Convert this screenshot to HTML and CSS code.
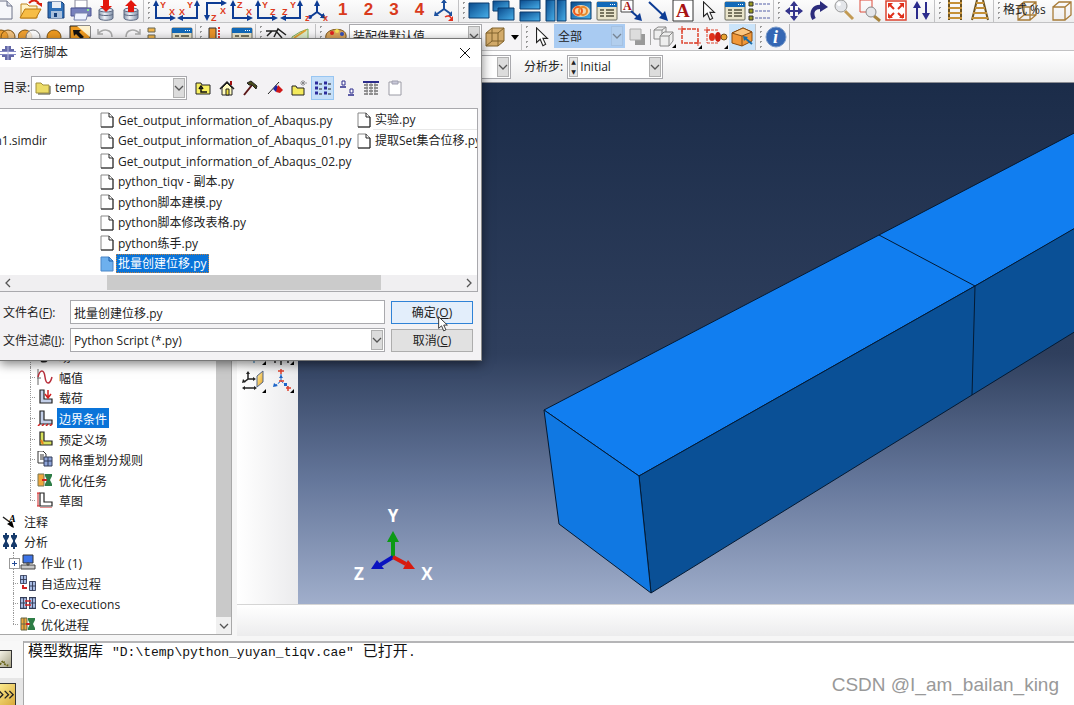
FILE: index.html
```
<!DOCTYPE html>
<html lang="zh-CN">
<head>
    <meta charset="UTF-8">
    <meta name="viewport" content="width=device-width, initial-scale=1.0">
    <title>Abaqus/CAE</title>
    <link rel="stylesheet" href="styles.css">
</head>
<body>
    <!-- Shared icons -->
    <svg class="defs" width="0" height="0" aria-hidden="true">
        <defs>
            <linearGradient id="win" x1="0" y1="0" x2="1" y2="1">
                <stop offset="0" stop-color="#0a4a8c"/><stop offset="1" stop-color="#48b0ea"/>
            </linearGradient>
            <linearGradient id="metal" x1="0" y1="0" x2="1" y2="0">
                <stop offset="0" stop-color="#8d9bb0"/><stop offset=".4" stop-color="#eef2f8"/><stop offset="1" stop-color="#8090a8"/>
            </linearGradient>
            <linearGradient id="gold" x1="0" y1="0" x2="1" y2="1">
                <stop offset="0" stop-color="#fff0b0"/><stop offset="1" stop-color="#e8a21c"/>
            </linearGradient>
            <marker id="tip" viewBox="0 0 6 6" refX="3" refY="3" markerWidth="3" markerHeight="3" orient="auto-start-reverse">
                <path d="M0 0L6 3L0 6Z" fill="#0d3c94"/>
            </marker>
        </defs>
        <symbol id="table" viewBox="0 0 24 24">
            <rect x="2" y="3" width="20" height="18" rx="1" fill="#e9e4cb" stroke="#6b6a5c"/>
            <rect x="2" y="3" width="20" height="5" fill="#1269b8"/><path d="M15 5.500H21" stroke="#fff" stroke-dasharray="1 1"/>
            <path d="M5 11H9M11 11H19M5 14H9M11 14H19M5 17H9M11 17H19" stroke="#77745f" stroke-width="2"/>
        </symbol>
        <symbol id="file" viewBox="0 0 14 16">
            <path d="M1 1H9L13 5V15H1Z" fill="#fff" stroke="#888"/><path d="M9 1V5H13V15H1" fill="none" stroke="#222"/>
        </symbol>
        <symbol id="down" viewBox="0 0 10 6"><path d="M1 1L5 5L9 1" fill="none" stroke="#555" stroke-width="1.300"/></symbol>
        <symbol id="arrow" viewBox="0 0 16 22">
            <path d="M2 1V17L6 13.500L9 20.500L12 19L9 12.500H14Z" fill="#fff" stroke="#222" stroke-width="1.200"/>
        </symbol>
        <symbol id="axisL" viewBox="0 0 24 24">
            <path d="M4 4V19H21" fill="none" stroke="#0d3c94" stroke-width="2" marker-end="url(#tip)" marker-start="url(#tip)"/>
        </symbol>
        <symbol id="axisR" viewBox="0 0 24 24">
            <path d="M20 4V19H3" fill="none" stroke="#0d3c94" stroke-width="2" marker-end="url(#tip)" marker-start="url(#tip)"/>
        </symbol>
        <symbol id="cube" viewBox="0 0 24 24">
            <path d="M3 8H15V21H3ZM3 8L9 3H21V16L15 21M15 8L21 3M9 3V16H21M9 16L3 21" fill="none"/>
        </symbol>
        <symbol id="bracket" viewBox="0 0 16 16">
            <path d="M3 1H7V10H15V14H3Z" stroke="#222" stroke-width="1.200"/>
        </symbol>
        <symbol id="grid" viewBox="0 0 8 10" preserveAspectRatio="none">
            <path d="M.5 .5H7.500V9.500H.5Z" fill="#a8bce4" stroke="#333c58"/><path d="M4 0V10M0 5H8" stroke="#333c58"/>
        </symbol>
    </svg>

    <div class="app">
        <!-- Main toolbar -->
        <div class="toolbar main-bar">
            <div class="group file-group">
                <button aria-label="New"><svg viewBox="0 0 24 24"><path d="M3 2H13L18 7V20H3Z" fill="#f6f7fa" stroke="#6c7388"/><path d="M13 2V7H18" fill="#d5d9e4" stroke="#6c7388"/></svg></button>
                <button aria-label="Open"><svg viewBox="0 0 24 24"><path d="M2 19V5H8L10 7H18V19Z" fill="#fff3c8" stroke="#c0851c"/><path d="M1 19L6 10H22L17 19Z" fill="#f7bd45" stroke="#b87912"/><path d="M10 4C14 0 18 1 20 5" fill="none" stroke="#d9210f" stroke-width="2"/><path d="M17 4H23V8Z" fill="#d9210f"/></svg></button>
                <button aria-label="Save"><svg viewBox="0 0 24 24"><path d="M4 3H18L20 5V19H4Z" fill="#2f6fb6" stroke="#163f79"/><path d="M8 3H17V9H8Z" fill="#e8edf4"/><path d="M7 12H18V19H7Z" fill="#a9c0dc"/><path d="M10 14H13V18H10Z" fill="#163f79"/></svg></button>
                <button aria-label="Print"><svg viewBox="0 0 24 24"><path d="M6 1H18V9H6Z" fill="#fff" stroke="#889"/><path d="M2 9H22V17H2Z" fill="#7781bd" stroke="#4a5290"/><path d="M6 14H19L17 21H5Z" fill="#eef3ff" stroke="#7780aa"/><path d="M18 11H20" stroke="#8df08d" stroke-width="2"/></svg></button>
                <button aria-label="Import"><svg viewBox="0 0 24 24"><path d="M5 11V19C5 22 19 22 19 19V11Z" fill="url(#metal)" stroke="#5c6880"/><ellipse cx="12" cy="11" rx="7" ry="2" fill="#dde5f0" stroke="#5c6880"/><path d="M5 15C5 17 19 17 19 15" fill="none" stroke="#5c6880"/><path d="M9 0H15V7H18L12 13L6 7H9Z" fill="#e3170d"/></svg></button>
                <button aria-label="Export"><svg viewBox="0 0 24 24"><path d="M5 11V19C5 22 19 22 19 19V11Z" fill="url(#metal)" stroke="#5c6880"/><ellipse cx="12" cy="11" rx="7" ry="2" fill="#dde5f0" stroke="#5c6880"/><path d="M5 15C5 17 19 17 19 15" fill="none" stroke="#5c6880"/><path d="M9 13H15V7H18L12 1L6 7H9Z" fill="#e3170d"/></svg></button>
            </div>
            <span class="grip"></span>
            <div class="group views-group">
                <button aria-label="XY"><svg viewBox="0 0 24 24"><use href="#axisL"/><text x="8" y="9">Y</text><text x="17" y="16">X</text></svg></button>
                <button aria-label="YX"><svg viewBox="0 0 24 24"><use href="#axisR"/><text x="10" y="9">Y</text><text x="2" y="16">X</text></svg></button>
                <button aria-label="XZ"><svg viewBox="0 0 24 24"><path d="M21 4H4V19" fill="none" stroke="#0d3c94" stroke-width="2" marker-end="url(#tip)" marker-start="url(#tip)"/><text x="17" y="15">X</text><text x="8" y="22">Z</text></svg></button>
                <button aria-label="ZX"><svg viewBox="0 0 24 24"><use href="#axisL"/><text x="8" y="9">Z</text><text x="17" y="16">X</text></svg></button>
                <button aria-label="YZ"><svg viewBox="0 0 24 24"><use href="#axisL"/><text x="8" y="9">Y</text><text x="16" y="16">Z</text></svg></button>
                <button aria-label="ZY"><svg viewBox="0 0 24 24"><use href="#axisR"/><text x="10" y="9">Y</text><text x="2" y="16">Z</text></svg></button>
                <button aria-label="Iso"><svg viewBox="0 0 24 24"><path d="M12 4V13L5 18M12 13L19 18" fill="none" stroke="#0d3c94" stroke-width="2" marker-start="url(#tip)" marker-end="url(#tip)"/><circle cx="5" cy="18" r="2" fill="#0d3c94"/><text x="0" y="22">z</text><text x="18" y="22">x</text></svg></button>
                <button class="num">1</button>
                <button class="num">2</button>
                <button class="num">3</button>
                <button class="num">4</button>
                <button aria-label="Rotate triad"><svg viewBox="0 0 24 24"><path d="M11 2V10L4 15M11 10L18 15" fill="none" stroke="#1a4f9e" stroke-width="2"/><path d="M8 4H14L11 0ZM2 12L6 17L1 17ZM19 12V17H15Z" fill="#1a4f9e"/><path d="M12 18C15 16 17 17 18 19" fill="none" stroke="#e0301e" stroke-width="1.500"/><path d="M20 17V22H15Z" fill="#e0301e"/></svg></button>
            </div>
            <span class="grip"></span>
            <div class="group wide-group">
                <button aria-label="Single viewport"><svg viewBox="0 0 24 24"><path d="M2 4H22V19H2Z" fill="url(#win)" stroke="#0a3a6c"/></svg></button>
                <button aria-label="Cascade"><svg viewBox="0 0 24 24"><path d="M1 2H17V12H1Z" fill="url(#win)" stroke="#0a3a6c"/><path d="M6 9H22V21H6Z" fill="url(#win)" stroke="#0a3a6c"/></svg></button>
                <button aria-label="Tile horizontally"><svg viewBox="0 0 24 24"><path d="M2 1H22V10H2Z" fill="url(#win)" stroke="#0a3a6c"/><path d="M2 13H22V22H2Z" fill="url(#win)" stroke="#0a3a6c"/></svg></button>
                <button aria-label="Tile vertically"><svg viewBox="0 0 24 24"><path d="M2 1H11V22H2Z" fill="url(#win)" stroke="#0a3a6c"/><path d="M13 1H22V22H13Z" fill="url(#win)" stroke="#0a3a6c"/></svg></button>
                <button aria-label="Link viewports"><svg viewBox="0 0 24 24"><path d="M2 3H22V20H2Z" fill="url(#win)" stroke="#0a3a6c"/><ellipse cx="12" cy="12" rx="9" ry="6" fill="#f6d9b0"/><circle cx="9" cy="12" r="4" fill="none" stroke="#ee5a1e" stroke-width="2"/><circle cx="14" cy="12" r="4" fill="none" stroke="#e88a2c" stroke-width="2"/></svg></button>
                <button aria-label="Viewport table"><svg><use href="#table"/></svg></button>
                <button aria-label="Annotation"><svg viewBox="0 0 24 24"><path d="M1 1H13V13H1Z" fill="#fff" stroke="#444"/><text x="3" y="11" class="serif-a">A</text><path d="M11 12L20 20" stroke="#0d3c94" stroke-width="2"/><path d="M22 22L14 20L20 14Z" fill="#0d3c94"/></svg></button>
                <button aria-label="Arrow"><svg viewBox="0 0 24 24"><path d="M3 3L19 18" stroke="#0d3c94" stroke-width="2"/><path d="M22 22L13 19L19 12Z" fill="#0d3c94"/></svg></button>
                <button aria-label="Text"><svg viewBox="0 0 24 24"><path d="M2 1H22V22H2Z" fill="#fff" stroke="#333"/><text x="5" y="18" class="serif-a big">A</text></svg></button>
                <button aria-label="Select"><svg viewBox="0 0 24 24"><use href="#arrow" x="4" y="2" width="16" height="20"/></svg></button>
                <button aria-label="Manager"><svg><use href="#table"/></svg></button>
                <button aria-label="Options"><svg viewBox="0 0 24 24"><path d="M1 3H5V7H1ZM1 10H5V14H1ZM1 17H5V21H1Z" fill="#9b9b20" stroke="#333"/><path d="M7 5H22M7 12H22M7 19H22" stroke="#5560a8" stroke-dasharray="3 1"/></svg></button>
            </div>
            <span class="grip"></span>
            <div class="group nav-group">
                <button aria-label="Pan"><svg viewBox="0 0 24 24"><path d="M12 4V20M4 12H20" stroke="#34348c" stroke-width="2"/><path d="M12 2L16 7H8ZM12 22L16 17H8ZM3 12L8 8V16ZM21 12L16 8V16Z" fill="#34348c"/></svg></button>
                <button aria-label="Rotate"><svg viewBox="0 0 24 24"><path d="M7 20C3 13 7 7 15 8" fill="none" stroke="#2c2c7c" stroke-width="4"/><path d="M13 2L21 8L13 13Z" fill="#2c2c7c"/></svg></button>
                <button aria-label="Magnify"><svg viewBox="0 0 24 24"><path d="M12 12L20 20" stroke="#c29a52" stroke-width="3"/><circle cx="8" cy="7" r="6" fill="#e4e6ea" stroke="#999"/><circle cx="6" cy="5" r="2" fill="#fff"/></svg></button>
                <button aria-label="Box zoom"><svg viewBox="0 0 24 24"><path d="M2 1H14V13H2Z" fill="none" stroke="#dd4b3a"/><path d="M16 17L22 22" stroke="#a8843e" stroke-width="3"/><circle cx="13" cy="13" r="5" fill="#e4e6ea" stroke="#888"/></svg></button>
                <button aria-label="Fit view"><svg viewBox="0 0 24 24"><path d="M2 2H22V21H2Z" fill="#fff" stroke="#dd4430" stroke-width="1.500"/><path d="M10 10L5 5M14 10L19 5M10 14L5 19M14 14L19 19" stroke="#e0301a" stroke-width="2"/><path d="M4 4H9L4 9ZM20 4V9L15 4ZM4 19V14L9 19ZM20 19H15L20 14Z" fill="#e0301a"/></svg></button>
                <button aria-label="Cycle views"><svg viewBox="0 0 24 24"><path d="M8 6V20M17 3V17" stroke="#2c2c8c" stroke-width="2"/><path d="M8 2L12 9H4ZM17 21L21 14H13Z" fill="#2c2c8c"/></svg></button>
            </div>
            <span class="grip"></span>
            <div class="group pair-group">
                <button aria-label="Parallel"><svg viewBox="0 0 24 24"><path d="M6 1V21M18 1V21" stroke="#6e5420" stroke-width="2"/><path d="M5 4H19M5 9H19M5 14H19M5 19H19" stroke="#c59138" stroke-width="2"/></svg></button>
                <button aria-label="Perspective"><svg viewBox="0 0 24 24"><path d="M9 1L4 21M15 1L20 21" stroke="#6e5420" stroke-width="2"/><path d="M8 4H16M7 9H17M5 14H19M4 19H20" stroke="#c59138" stroke-width="2"/></svg></button>
            </div>
            <span class="grip"></span>
            <div class="group render-group">
                <button aria-label="Wireframe"><svg class="brown" viewBox="0 0 24 24"><use href="#cube"/></svg></button>
                <button aria-label="Hidden"><svg class="brown" viewBox="0 0 24 24"><path d="M3 8H15V21H3ZM3 8L9 3H21V16L15 21M15 8L21 3" fill="none"/></svg></button>
                <span class="format-label">格式 %s</span>
            </div>
        </div>

        <!-- Second toolbar -->
        <div class="toolbar second-bar">
            <div class="group bool-group">
                <button aria-label="Replace"><svg viewBox="0 0 24 24"><circle cx="8" cy="12" r="7" fill="#f0a030" stroke="#7a5010"/><circle cx="15" cy="12" r="7" fill="#f0a030" fill-opacity=".6" stroke="#7a5010"/></svg></button>
                <button aria-label="Intersect"><svg viewBox="0 0 24 24"><circle cx="7" cy="12" r="7" fill="#f0a030" stroke="#7a5010"/><circle cx="15" cy="12" r="7" fill="#fff" fill-opacity=".8" stroke="#777"/></svg></button>
                <button aria-label="Both"><svg viewBox="0 0 24 24"><circle cx="11" cy="12" r="7" fill="#ee9a20" stroke="#7a5010"/></svg></button>
                <button aria-label="Invert"><svg viewBox="0 0 24 24"><path d="M1 1H21V22H1Z" fill="#ee9a20" stroke="#222"/><path d="M8 1H21V12Z" fill="#fff3d0"/><path d="M4 5H12L10 7L15 12L12 14L7 9L5 11Z" fill="#111"/></svg></button>
                <button aria-label="Undo"><svg viewBox="0 0 24 24"><path d="M4 4V9H9M4 9C9 3 18 4 18 12" fill="none" stroke="#aaa" stroke-width="1.500"/></svg></button>
                <button aria-label="Redo"><svg viewBox="0 0 24 24"><path d="M20 4V9H15M20 9C15 3 6 4 6 12" fill="none" stroke="#aaa" stroke-width="1.500"/></svg></button>
                <button aria-label="Display group"><svg viewBox="0 0 24 24"><path d="M3 3H10V7H3ZM3 10H10V17H3Z" fill="#f3b64c" stroke="#665"/></svg></button>
                <button aria-label="Display groups"><svg><use href="#table"/></svg></button>
            </div>
            <span class="grip"></span>
            <div class="group cut-group">
                <button aria-label="View cut"><svg viewBox="0 0 24 24"><path d="M5 3H12V20H5Z" fill="#e8932a" stroke="#333"/><path d="M15 2V22" stroke="#d33" stroke-width="2" stroke-dasharray="2 1"/></svg></button>
                <button aria-label="View cuts"><svg><use href="#table"/></svg></button>
            </div>
            <span class="grip"></span>
            <div class="group cut-group">
                <button aria-label="Partition"><svg viewBox="0 0 24 24"><path d="M2 6H12L18 13M3 11L8 6M10 12L14 4L22 10" fill="none" stroke="#222" stroke-width="1.500"/></svg></button>
                <button aria-label="Mesh"><svg viewBox="0 0 24 24"><path d="M2 12L10 7L18 4V16H2Z" fill="#dcebc8" stroke="#7fae58"/><path d="M4 13L16 5" stroke="#e0a030" stroke-width="2"/></svg></button>
            </div>
            <span class="grip"></span>
            <button aria-label="Color code"><svg viewBox="0 0 24 24"><path d="M2 10C4 3 21 2 22 10C23 15 18 18 14 15C8 20 0 17 2 10Z" fill="#d9a45a" stroke="#75501c"/><circle cx="8" cy="8" r="2" fill="#e02020"/><circle cx="13" cy="6" r="2" fill="#f4e050"/><circle cx="18" cy="9" r="2" fill="#3450b8"/></svg></button>
            <span class="combo defaults-combo">
                <select aria-label="Color mapping"><option>装配件默认值</option></select>
                <span class="drop"><svg><use href="#down"/></svg></span>
            </span>
            <button aria-label="Translucency"><svg class="translucent" viewBox="0 0 24 24"><path d="M3 8L9 3H21V16L15 21H3Z" fill="#d3ab6a" stroke="none"/><use href="#cube"/></svg></button>
            <button class="caret" aria-label="More"><svg viewBox="0 0 8 5"><path d="M0 0H8L4 5Z"/></svg></button>
            <span class="grip"></span>
            <button class="pick" aria-label="Select entities"><svg viewBox="0 0 24 24"><use href="#arrow" x="4" y="2" width="16" height="20"/></svg></button>
            <span class="combo all-combo">
                <select aria-label="Selection filter"><option>全部</option></select>
                <span class="drop"><svg><use href="#down"/></svg></span>
            </span>
            <button class="pick" aria-label="Underlying"><svg viewBox="0 0 24 24"><path d="M9 9H19V20H9Z" fill="#999"/><path d="M4 4H15V15H4Z" fill="#ddd" stroke="#aaa"/></svg></button>
            <span class="line"></span>
            <button aria-label="Inside"><svg viewBox="0 0 24 24"><g fill="#eee" stroke="#888"><path d="M2 5L6 2H14V10L10 14H2ZM2 5H10V14M10 5L14 2"/><path d="M8 11L12 7H21V16L17 21H8ZM8 11H17V21M17 11L21 7"/></g><path d="M24 19V23H20Z"/></svg></button>
            <button aria-label="Rectangle"><svg viewBox="0 0 24 24"><path d="M4 4H20V18H4Z" fill="none" stroke="#dd4430" stroke-width="1.500" stroke-dasharray="4 1"/><path d="M0 4H7M4 1V7M17 18H23M20 15V21" stroke="#dd4430"/><path d="M24 20V24H20Z"/></svg></button>
            <button aria-label="Drag shape"><svg viewBox="0 0 24 24"><path d="M3 5H15M3 18H15M3 5V18" fill="none" stroke="#dd4430" stroke-dasharray="3 1"/><path d="M0 5H6M3 2V8" stroke="#dd4430"/><ellipse cx="8" cy="12" rx="3" ry="4" fill="#e0301a"/><ellipse cx="14" cy="12" rx="3" ry="5" fill="#c91d10"/><circle cx="20" cy="12" r="3" fill="#e8a030" stroke="#75501c"/><path d="M24 20V24H20Z"/></svg></button>
            <button class="active" aria-label="Closest"><svg viewBox="0 0 24 24"><path d="M2 8L13 3L22 7V16L12 21L2 18Z" fill="#f0983a" stroke="#8a4c10"/><path d="M2 8L13 3L22 7L12 11Z" fill="#fbc57e" stroke="#8a4c10"/><path d="M12 11V21" stroke="#8a4c10"/><path d="M15 13L22 19" stroke="#176ba8" stroke-width="2"/><path d="M13 11L18 12L14 16Z" fill="#176ba8"/></svg></button>
            <span class="grip"></span>
            <button class="info" aria-label="Query"><svg viewBox="0 0 24 24"><circle cx="12" cy="12" r="10" fill="#3567b4" stroke="#7b9bc9"/><text x="9" y="18" class="info-i">i</text></svg></button>
            <span class="bar-end"></span>
        </div>

        <!-- Context bar -->
        <div class="context-bar">
            <span class="combo module-combo">
                <select aria-label="装配"><option></option></select>
                <span class="drop"><svg><use href="#down"/></svg></span>
            </span>
            <label for="step">分析步:</label>
            <span class="combo step-combo">
                <span class="spin"><i>▲</i><i>▼</i></span>
                <select id="step"><option>Initial</option></select>
                <span class="drop"><svg><use href="#down"/></svg></span>
            </span>
        </div>

        <div class="workspace">
            <!-- Model tree -->
            <div class="tree-panel">
                <ul class="tree">
                    <li class="deep"><svg class="ico" viewBox="0 0 16 16"><path d="M4 13C10 15 12 11 10 6" fill="none" stroke="#222" stroke-width="2"/></svg><span>场</span></li>
                    <li class="deep"><svg class="ico" viewBox="0 0 16 16"><path d="M1 0V16M0 9H4" stroke="#666"/><path d="M1 8C3 0 7 0 8 8S13 16 15 8" fill="none" stroke="#b8303c" stroke-width="1.500"/></svg><span>幅值</span></li>
                    <li class="deep"><svg class="ico" viewBox="0 0 16 16" fill="#c3cfe8"><use href="#bracket"/><path d="M11 1V8M8 5L11 9L14 5" fill="none" stroke="#d02020" stroke-width="1.500"/></svg><span>载荷</span></li>
                    <li class="deep"><svg class="ico" viewBox="0 0 16 16" fill="#c3cfe8"><use href="#bracket"/><path d="M1 16L3 14M5 16L7 14M9 16L11 14M13 16L15 14" stroke="#d02020" stroke-width="1.500"/></svg><span class="selected">边界条件</span></li>
                    <li class="deep"><svg class="ico" viewBox="0 0 16 16" fill="#d6e05c"><use href="#bracket"/><path d="M4 9L6 13" stroke="#f08020" stroke-width="2"/></svg><span>预定义场</span></li>
                    <li class="deep"><svg class="ico" viewBox="0 0 16 16"><path d="M1 0H6L9 3V12H1Z" fill="#fff" stroke="#333"/><path d="M3 4H7M3 6H7M3 8H7" stroke="#333"/><path d="M7 6H15V15H7Z" fill="#8ea4d8" stroke="#333c58"/><path d="M11 6V15M7 10H15" stroke="#333c58"/></svg><span>网格重划分规则</span></li>
                    <li class="deep"><svg class="ico" viewBox="0 0 16 16"><path d="M1 2H7V14H1Z" fill="#f0a83c" stroke="#775"/><path d="M5 8H11" stroke="#d02020" stroke-width="2"/><path d="M8 2H15V4L13 8L15 12V14H8V12L10 8L8 4Z" fill="#2e7d46"/></svg><span>优化任务</span></li>
                    <li class="deep last"><svg class="ico" viewBox="0 0 16 16" fill="#fff"><use href="#bracket"/><path d="M1 1V14M0 1H3M0 14H3M3 16H15" stroke="#d02020"/></svg><span>草图</span></li>
                    <li class="root"><svg class="ico" viewBox="0 0 16 16"><path d="M1 4L9 10M8 12L11 14" stroke="#222" stroke-width="1.500"/><path d="M5 11L12 15L10 8Z"/><text x="7" y="9" class="note-a">A</text></svg><span>注释</span></li>
                    <li class="root"><svg class="ico" viewBox="0 0 16 16"><path d="M4 0V16M12 0V16M1 3H7M1 13H7M9 3H15M9 13H15" stroke="#153a6b" stroke-width="2"/><path d="M4 9L1 4H7ZM4 7L7 12H1ZM12 9L9 4H15ZM12 7L15 12H9Z" fill="#153a6b"/></svg><span>分析</span></li>
                    <li class="mid plus"><svg class="ico" viewBox="0 0 16 16"><path d="M3 1H13V9H3Z" fill="#3d74e8" stroke="#333"/><path d="M7 9H9V11H7ZM1 11H15V15H1Z" fill="#c8c8c8" stroke="#444"/></svg><span>作业 (1)</span></li>
                    <li class="mid"><svg class="ico" viewBox="0 0 16 16"><use href="#grid" x="0" y="0" width="7" height="9"/><use href="#grid" x="9" y="6" width="7" height="10"/><path d="M3 10V13H7" fill="none" stroke="#d02020" stroke-width="2"/></svg><span>自适应过程</span></li>
                    <li class="mid"><svg class="ico" viewBox="0 0 16 16"><use href="#grid" x="0" y="2" width="7" height="12"/><use href="#grid" x="9" y="2" width="7" height="12"/><path d="M5 6H11M5 10H11" stroke="#d02020" stroke-width="1.500"/></svg><span>Co-executions</span></li>
                    <li class="mid last"><svg class="ico" viewBox="0 0 16 16"><path d="M1 2H7V14H1ZM4 2V14M1 8H7" fill="#f0a83c" stroke="#664"/><path d="M6 8H11" stroke="#d02020" stroke-width="2"/><path d="M8 2H15V4L13 8L15 12V14H8V12L10 8L8 4Z" fill="#2e7d46"/></svg><span>优化进程</span></li>
                </ul>
                <div class="vscroll"><span class="thumb"></span><span class="vdown"><svg><use href="#down"/></svg></span></div>
            </div>

            <div class="stage">
                <div class="stage-top">
                    <!-- Module toolbox -->
                    <div class="toolbox">
                        <button aria-label="Create field"><svg viewBox="0 0 24 24"><path d="M12 4V22" stroke="#176ba8"/><path d="M24 20V24H20Z"/></svg></button>
                        <button aria-label="Field manager"><svg viewBox="0 0 24 24"><path d="M5 22V19H18V22M11 18V24" fill="none" stroke="#222" stroke-width="1.500"/><path d="M24 20V24H20Z"/></svg></button>
                        <button aria-label="Create plane"><svg viewBox="0 0 24 24"><path d="M6 4V10L2 13M6 10H12M2 19H13" fill="none" stroke="#222" stroke-width="1.500"/><path d="M4 5L6 2L8 5ZM11 8L14 10L11 12ZM3 17L0 19L3 21ZM12 17L15 19L12 21ZM0 14L1 10L4 13Z" fill="#222"/><path d="M15 7L21 2V13L15 18Z" fill="url(#gold)" stroke="#568"/><path d="M24 20V24H20Z"/></svg></button>
                        <button aria-label="Create triad"><svg viewBox="0 0 24 24"><path d="M11 5V12L5 17M11 12L18 18" fill="none" stroke="#1b64c8" stroke-dasharray="3 1"/><path d="M8 2H14M11 0V5M9 12H14M16 19H21M18 17V22" stroke="#e0402c" stroke-width="1.500"/><path d="M9 9L11 6L13 9ZM3 18L4 14L8 17ZM14 14H17V17H14Z" fill="#1b64c8"/><path d="M24 20V24H20Z"/></svg></button>
                    </div>

                    <!-- Viewport -->
                    <div class="viewport">
                        <svg class="scene" viewBox="0 0 776 521" preserveAspectRatio="xMinYMin slice">
                            <g stroke="#041a33" stroke-width="1" stroke-linejoin="round">
                                <path d="M246 327L581 152L960 -46L1100 -40L677 203L341 393Z" fill="#117ef0"/>
                                <path d="M341 393L677 203L960 39V136L674 312L353 510Z" fill="#0a5096"/>
                                <path d="M246 327L341 393L353 510L261 441Z" fill="#1078e2"/>
                                <path d="M581 152L677 203L674 312" fill="none"/>
                            </g>
                            <path d="M95 474V455" stroke="#0b9a14" stroke-width="4"/>
                            <path d="M95 448L101 459H89Z" fill="#0b9a14"/>
                            <path d="M95 474L82 482" stroke="#0a12c0" stroke-width="4"/>
                            <path d="M73 486L79 477L86 486Z" fill="#0a12c0"/>
                            <path d="M95 474L108 481" stroke="#d81a0e" stroke-width="4"/>
                            <path d="M117 486L110 477L105 486Z" fill="#d81a0e"/>
                            <g class="triad"><text x="95" y="439">Y</text><text x="129" y="497">X</text><text x="61" y="497">Z</text></g>
                        </svg>
                    </div>
                </div>
                <div class="prompt-bar"></div>
            </div>
        </div>

        <!-- Message area -->
        <div class="console">
            <div class="console-tabs">
                <button class="msg-tab" aria-label="Messages"><svg viewBox="0 0 12 18"><path d="M0 15C3 10 5 10 4 14L9 16" fill="none" stroke="#6a661c" stroke-width="2" stroke-dasharray="2 1"/></svg></button>
                <button class="cli-tab" aria-label="Command line"><svg viewBox="0 0 16 12"><path d="M-1 2L3 6L-1 10M5 2L9 6L5 10M10 2L14 6L10 10" fill="none" stroke="#222" stroke-width="1.500"/></svg></button>
            </div>
            <div class="messages"><span class="cn">模型数据库 </span>"D:\temp\python_yuyan_tiqv.cae"<span class="cn"> 已打开</span>.</div>
        </div>
    </div>

    <!-- Run script dialog -->
    <div class="dialog" role="dialog" aria-label="运行脚本">
        <div class="dialog-title">
            <svg viewBox="0 0 16 16" width="16" height="16"><path d="M5 1H11V4H5ZM2 4H14V7H2ZM2 9H14V12H2ZM5 12H11V15H5Z" fill="#6469a8"/><path d="M0 6H16V7H0ZM0 9H16V10H0Z" fill="#8489c4"/><path d="M8 1V15" stroke="#b4b8e0"/></svg>
            <span>运行脚本</span>
            <button class="close" aria-label="Close"><svg viewBox="0 0 10 10" width="10" height="10"><path d="M0 0L10 10M10 0L0 10" stroke="#111"/></svg></button>
        </div>
        <div class="dir-row">
            <label for="dir">目录:</label>
            <span class="combo dir-combo">
                <svg class="folder" viewBox="0 0 16 14"><path d="M1 2H6L8 4H14V12H1Z" fill="#ecdc68" stroke="#a0903c"/><path d="M3 13H15V5" fill="none" stroke="#4b4a30"/></svg>
                <select id="dir"><option>temp</option></select>
                <span class="drop"><svg><use href="#down"/></svg></span>
            </span>
            <div class="dir-tools">
                <button aria-label="Up"><svg viewBox="0 0 16 16"><path d="M1 3H6L7 5H15V14H1Z" fill="#f8f060" stroke="#222"/><path d="M12 12H6V8M4 9L6 6L8 9" fill="none" stroke="#111" stroke-width="1.500"/></svg></button>
                <button aria-label="Home"><svg viewBox="0 0 16 16"><path d="M3 8V15H13V8L8 3Z" fill="#fffcc0" stroke="#222"/><path d="M1 9L8 2L15 9" fill="none" stroke="#222" stroke-width="1.500"/><path d="M12 1V5" stroke="#a01010" stroke-width="2"/><path d="M7 9H10V15H7Z" fill="#f0e040" stroke="#222"/></svg></button>
                <button aria-label="Work"><svg viewBox="0 0 16 16"><path d="M1 15L9 5" stroke="#5a1616" stroke-width="2"/><path d="M4 3L8 1L14 6L13 9L9 5L6 5Z" fill="#4a4c1c" stroke="#222"/></svg></button>
                <button aria-label="Bookmark"><svg viewBox="0 0 16 16"><path d="M1 14L12 2" stroke="#222"/><path d="M9 5L12 8L9 12L6 9Z" fill="#2226a0"/><path d="M11 5L16 10L13 13L9 12Z" fill="#d01818"/></svg></button>
                <button aria-label="New folder"><svg viewBox="0 0 16 16"><path d="M1 6H5L6 8H13V15H1Z" fill="#f4ea5c" stroke="#222"/><path d="M12 0V6M9 3H16M10 1L14 5M14 1L10 5" stroke="#777" stroke-width=".7"/></svg></button>
                <button class="active" aria-label="List"><svg viewBox="0 0 16 16"><path d="M0 3H3M9 3H12M0 8H3M9 8H12M0 13H3M9 13H12" stroke="#2c2c9c" stroke-width="3"/><path d="M4 4H7M13 4H16M4 9H7M13 9H16M4 14H7M13 14H16" stroke="#222"/></svg></button>
                <button aria-label="Icons"><svg viewBox="0 0 16 16"><path d="M3 1H6V5H3ZM11 9H14V13H11Z" fill="#fff" stroke="#2c2c8c"/><path d="M1 7H7M9 15H15" stroke="#2c2c8c" stroke-width="1.500"/></svg></button>
                <button aria-label="Details"><svg viewBox="0 0 16 16"><path d="M0 2H16" stroke="#2c2c8c" stroke-width="2"/><path d="M1 5H16M1 8H16M1 11H16M1 14H16" stroke="#333" stroke-dasharray="4 1"/><path d="M4 3V15M8 3V15M12 3V15" stroke="#888"/></svg></button>
                <button aria-label="Paste"><svg viewBox="0 0 16 16"><path d="M2 2H14V15H2Z" fill="#fff" stroke="#9a9aa4"/><path d="M5 1H11V4H5Z" fill="#c8c8d8" stroke="#a0a0b0"/></svg></button>
            </div>
        </div>
        <div class="file-box">
            <ul class="files">
                <li class="clipped">n1.simdir</li>
                <li class="second first"><svg><use href="#file"/></svg><span>Get_output_information_of_Abaqus.py</span></li>
                <li class="second"><svg><use href="#file"/></svg><span>Get_output_information_of_Abaqus_01.py</span></li>
                <li class="second"><svg><use href="#file"/></svg><span>Get_output_information_of_Abaqus_02.py</span></li>
                <li class="second"><svg><use href="#file"/></svg><span>python_tiqv - 副本.py</span></li>
                <li class="second"><svg><use href="#file"/></svg><span>python脚本建模.py</span></li>
                <li class="second"><svg><use href="#file"/></svg><span>python脚本修改表格.py</span></li>
                <li class="second"><svg><use href="#file"/></svg><span>python练手.py</span></li>
                <li class="second picked"><svg viewBox="0 0 14 16"><path d="M1 1H9L13 5V15H1Z" fill="#6db0ee" stroke="#4a86c8"/><path d="M9 1V5H13" fill="none" stroke="#1c5ca8"/></svg><span class="selected">批量创建位移.py</span></li>
                <li class="third first"><svg><use href="#file"/></svg><span>实验.py</span></li>
                <li class="third"><svg><use href="#file"/></svg><span>提取Set集合位移.py</span></li>
            </ul>
            <div class="hscroll">
                <span class="hleft"><svg><use href="#down"/></svg></span>
                <span class="hthumb"></span>
                <span class="hright"><svg><use href="#down"/></svg></span>
            </div>
        </div>
        <div class="dialog-form">
            <label for="fname">文件名(<u>F</u>):</label>
            <input id="fname" type="text" value="批量创建位移.py">
            <button class="ok"><span>确定(<u>O</u>)</span></button>
            <label for="filter">文件过滤(<u>I</u>):</label>
            <span class="combo filter-combo">
                <select id="filter"><option>Python Script (*.py)</option></select>
                <span class="drop"><svg><use href="#down"/></svg></span>
            </span>
            <button class="cancel"><span>取消(<u>C</u>)</span></button>
        </div>
        <svg class="pointer" viewBox="0 0 16 22"><use href="#arrow"/></svg>
    </div>

    <div class="watermark">CSDN @I_am_bailan_king</div>
</body>
</html>
```
FILE: styles.css
```
* {
    box-sizing: border-box;
}

body {
    margin: 0;
    font-family: "Open Sans", "Noto Sans CJK SC", sans-serif;
    font-size: 12px;
    line-height: 16px;
    color: #222;
    background-color: #fff;
    overflow: hidden;
}

button {
    display: flex;
    align-items: center;
    justify-content: center;
    padding: 0;
    border: none;
    background: none;
    font: inherit;
    color: inherit;
}

select,
input {
    font: inherit;
    color: inherit;
}

.defs {
    position: absolute;
}

.app {
    display: flex;
    flex-direction: column;
    height: 100vh;
}

/* Toolbars */
.toolbar {
    display: flex;
    flex: none;
    overflow: hidden;
    background: linear-gradient(#fcfcfc, #eeeeef);
    border-bottom: 1px solid #c2c2c4;
}

.toolbar button {
    flex: none;
    width: 26px;
    height: 26px;
}

.toolbar button svg {
    flex: none;
    width: 24px;
    height: 24px;
}

.toolbar text {
    font: bold 9px/9px "Liberation Sans", sans-serif;
    fill: #dd3a20;
}

.toolbar .serif-a {
    font: bold 12px "Liberation Serif", serif;
    fill: #a81414;
}

.toolbar .serif-a.big {
    font-size: 19px;
}

.toolbar .info-i {
    font: italic bold 18px "Liberation Serif", serif;
    fill: #fff;
}

.group {
    display: flex;
    flex: none;
}

.group button {
    flex: 1;
    width: auto;
}

.grip {
    flex: none;
    width: 8px;
    border-left: 1px solid #c2c2c4;
    background: radial-gradient(circle, #999 1px, transparent 1px) 2px 0 / 5px 5px repeat-y;
}

.main-bar {
    height: 23px;
}

.main-bar button {
    margin-top: -2px;
}

.file-group {
    width: 149px;
    margin-left: -6px;
}

.views-group {
    width: 307px;
}

.wide-group {
    width: 307px;
}

.nav-group {
    width: 153px;
}

.pair-group {
    width: 51px;
}

.render-group {
    position: relative;
    width: 78px;
    padding-left: 8px;
}

.format-label {
    position: absolute;
    left: 2px;
    top: 2px;
    white-space: nowrap;
}

.main-bar .num {
    height: 24px;
    font: bold 17px "Liberation Sans", sans-serif;
    color: #d93a1c;
}

.brown {
    stroke: #a87c38;
    stroke-width: 1.3;
}

.translucent {
    stroke: #80622c;
    stroke-width: 1;
}

.second-bar {
    height: 28px;
    background: #f5f4f6;
    padding-top: 1px;
}

.bool-group {
    width: 203px;
    margin-left: -8px;
}

.cut-group {
    width: 52px;
}

.toolbar .caret {
    width: 13px;
}

.toolbar .caret svg {
    width: 8px;
    height: 5px;
}

.toolbar .pick {
    width: 25px;
}

.line {
    align-self: center;
    width: 1px;
    height: 16px;
    background-color: #aaa;
}

.toolbar .active {
    background-color: #cbe4fa;
}

.bar-end {
    border-left: 1px solid #b5b5b8;
}

/* Drop-downs */
.combo {
    display: flex;
    align-items: center;
    flex: none;
    height: 24px;
    padding: 1px;
    background-color: #fff;
    border: 1px solid #a9a9ad;
}

.combo select {
    flex: 1;
    min-width: 0;
    height: 20px;
    padding: 1px 2px 0;
    border: none;
    background: none;
    appearance: none;
}

.drop {
    display: flex;
    align-items: center;
    justify-content: center;
    width: 12px;
    height: 20px;
    background-color: #dcdcdc;
    border: 1px solid #b0b0b0;
}

.drop svg {
    width: 10px;
    height: 6px;
}

.defaults-combo {
    width: 133px;
}

.all-combo {
    width: 71px;
    background-color: #a9cbf2;
    border-color: #a9cbf2;
}

.all-combo .drop {
    background-color: #b9d0ea;
    border-color: #a4bbd6;
    opacity: .6;
}

/* Context bar */
.context-bar {
    display: flex;
    align-items: center;
    flex: none;
    height: 32px;
    background: linear-gradient(#fff, #ececed);
    border-bottom: 1px solid #8b8d93;
}

.module-combo {
    width: 511px;
}

.context-bar label {
    padding: 0 4px 0 13px;
}

.step-combo {
    width: 96px;
}

.spin {
    display: flex;
    flex-direction: column;
    justify-content: space-between;
    width: 9px;
    height: 20px;
    background-color: #e6e6e6;
    border: 1px solid #b5b5b5;
}

.spin i {
    font: 6px/8px "DejaVu Sans", sans-serif;
    text-align: center;
}

/* Workspace */
.workspace {
    display: flex;
    flex: 1;
    min-height: 0;
    background-color: #f6f6f6;
}

.tree-panel {
    display: flex;
    align-items: flex-end;
    flex: none;
    width: 232px;
    margin-bottom: 6px;
    background-color: #fff;
    border-right: 1px solid #a8a8a8;
    border-bottom: 1px solid #a8a8a8;
}

.tree {
    display: grid;
    grid-auto-rows: 1fr;
    flex: 1;
    height: 288px;
    margin: 0;
    padding: 0;
    list-style: none;
}

.tree li {
    position: relative;
    display: flex;
    align-items: center;
    gap: 4px;
}

.tree span {
    padding: 4px 2px 0;
}

.ico {
    flex: none;
    width: 16px;
    height: 16px;
}

.note-a {
    font: italic bold 10px "Liberation Serif", serif;
}

.tree .root {
    padding-left: 2px;
}

.tree .mid {
    padding-left: 20px;
    gap: 3px;
}

.tree .deep {
    padding-left: 37px;
}

/* Dotted connectors */
.tree .deep::before,
.tree .mid::before {
    content: "";
    position: absolute;
    top: 0;
    left: 13px;
    height: 100%;
    border-left: 1px dotted #999;
}

.tree .deep::after,
.tree .mid::after {
    content: "";
    position: absolute;
    top: 50%;
    left: 13px;
    width: 5px;
    border-top: 1px dotted #999;
}

.tree .deep::before,
.tree .deep::after {
    left: 30px;
}

.tree .last::before {
    height: 50%;
}

.tree .plus::after {
    top: 6px;
    left: 9px;
    width: 9px;
    height: 9px;
    background: linear-gradient(#234a94, #234a94) center / 5px 1px no-repeat, linear-gradient(#234a94, #234a94) center / 1px 5px no-repeat, #fff;
    border: 1px solid #999;
}

.tree .selected,
.files .selected {
    color: #fff;
    background-color: #0a74d9;
}

.vscroll {
    display: flex;
    flex-direction: column;
    width: 15px;
    height: 100%;
    background-color: #f0f0f0;
}

.thumb {
    flex: 1;
    background-color: #c9c9c9;
}

.vdown {
    display: flex;
    align-items: center;
    justify-content: center;
    height: 17px;
}

.vdown svg,
.hleft svg,
.hright svg {
    width: 10px;
    height: 6px;
}

.stage {
    display: flex;
    flex-direction: column;
    flex: 1;
    margin-left: 5px;
    min-width: 0;
}

.stage-top {
    display: flex;
    flex: 1;
    min-height: 0;
}

.toolbox {
    display: grid;
    grid-template-columns: 28px 28px;
    grid-auto-rows: 28px;
    align-content: start;
    justify-content: center;
    flex: none;
    width: 61px;
    padding-top: 256px;
    background: linear-gradient(90deg, #fff, #ebebed);
}

.toolbox svg {
    width: 24px;
    height: 24px;
}

.viewport {
    position: relative;
    flex: 1;
    overflow: hidden;
    background: linear-gradient(#1b2c49, #2f3f5d 52%, #64769a 76%, #a0aecb);
}

.scene {
    position: absolute;
    width: 100%;
    height: 100%;
}

.triad {
    font: bold 17px "Open Sans", sans-serif;
    text-anchor: middle;
    fill: #fff;
}

.prompt-bar {
    height: 37px;
    background: linear-gradient(#fff, #ececed 31px, #f6f6f6 31px);
    border-top: 1px solid #d5d5d5;
}

/* Message area */
.console {
    display: flex;
    flex: none;
    height: 64px;
    background-color: #fff;
}

.console-tabs {
    flex: none;
    width: 24px;
    border-right: 1px solid #a8a8a8;
    background: linear-gradient(#f8f8f8 37px, #e6e6e6 37px);
}

.msg-tab {
    width: 12px;
    height: 18px;
    margin-top: 9px;
    background: linear-gradient(135deg, #f4f2e6, #a5a184);
    border: 1px solid #333;
    border-left: none;
}

.cli-tab {
    width: 16px;
    height: 24px;
    margin-top: 15px;
    background: linear-gradient(135deg, #fbe98c, #d8a838);
    border: 1px solid #333;
    border-left: none;
}

.messages {
    flex: 1;
    padding: 2px 4px;
    border-top: 2px solid #b5b5b7;
    font: 13px/16px "Liberation Mono", "Noto Sans CJK SC", monospace;
    color: #111;
}

.messages .cn {
    font-size: 15px;
}

/* Dialog */
.dialog {
    position: absolute;
    left: 0;
    top: 38px;
    width: 482px;
    background: #f3f2f4;
    border-top: 1px solid #777;
    border-right: 1px solid #8a8a8a;
    border-bottom: 1px solid #777;
    box-shadow: 0 3px 10px rgba(0, 0, 0, 0.5);
}

.dialog-title {
    display: flex;
    align-items: center;
    height: 28px;
    background-color: #fff;
}

.dialog-title span {
    flex: 1;
    padding-left: 4px;
}

.close {
    width: 32px;
}

.dir-row {
    display: flex;
    align-items: center;
    height: 41px;
}

.dir-row label {
    width: 31px;
    padding-left: 3px;
    white-space: nowrap;
}

.dir-combo {
    width: 156px;
}

.folder {
    width: 16px;
    height: 14px;
    margin: 0 2px;
}

.dir-tools {
    display: flex;
    padding-left: 4px;
}

.dir-tools button {
    width: 23px;
    height: 24px;
    margin-right: 1px;
}

.dir-tools svg {
    flex: none;
    width: 16px;
    height: 16px;
}

.dir-tools .active {
    background-color: #c5dff8;
    border: 1px solid #98c6f2;
}

.file-box {
    width: 478px;
    background-color: #fff;
    border: 1px solid #a9a9ad;
    border-left: none;
}

.files {
    display: grid;
    grid-template-columns: 100px 257px 1fr;
    grid-template-rows: repeat(8, 1fr);
    grid-auto-flow: column;
    height: 166px;
    margin: 0;
    padding: 1px 0;
    list-style: none;
}

.files li {
    display: flex;
    align-items: center;
    gap: 2px;
    min-width: 0;
    overflow: hidden;
    white-space: nowrap;
}

.files svg {
    flex: none;
    width: 14px;
    height: 16px;
}

.files span {
    padding: 2px 2px 1px;
}

.files .clipped {
    grid-column: 1;
    grid-row: 2;
    justify-content: flex-end;
    width: 47px;
}

.files .second {
    grid-column: 2;
}

.files .third {
    grid-column: 3;
}

.files .first {
    grid-row: 1;
}

.third.first span {
    flex: 1;
    border-bottom: 1px solid #e8e8e8;
}

.files .selected {
    outline: 1px dotted #c08040;
    outline-offset: -1px;
}

.hscroll {
    display: flex;
    height: 16px;
    background-color: #f0eff1;
}

.hleft,
.hright {
    display: flex;
    align-items: center;
    justify-content: center;
    width: 16px;
    transform: rotate(90deg);
}

.hright {
    margin-left: auto;
    transform: rotate(-90deg);
}

.hthumb {
    width: 274px;
    height: 15px;
    margin-left: 91px;
    background-color: #cbcbcb;
}

.dialog-form {
    display: grid;
    grid-template-columns: 70px 315px 82px;
    grid-template-rows: 24px 24px;
    row-gap: 4px;
    align-items: center;
    padding: 8px 0;
}

.dialog-form label {
    padding: 2px 0 0 3px;
    white-space: nowrap;
}

.dialog-form input {
    height: 24px;
    padding: 1px 3px 0;
    border: 1px solid #a9a9ad;
    background-color: #fff;
}

.dialog-form button {
    height: 23px;
    padding-top: 2px;
    margin-left: 6px;
    margin-right: -6px;
    background-color: #e1e1e1;
    border: 1px solid #adadad;
}

.dialog-form .ok {
    background-color: #e3eefb;
    border: 1px solid #2f82d6;
}

.pointer {
    position: absolute;
    left: 437px;
    top: 277px;
    width: 12px;
    height: 16px;
}

.watermark {
    position: absolute;
    right: 15px;
    bottom: 8px;
    font: 19px/24px "Liberation Sans", sans-serif;
    color: #999;
}
```
